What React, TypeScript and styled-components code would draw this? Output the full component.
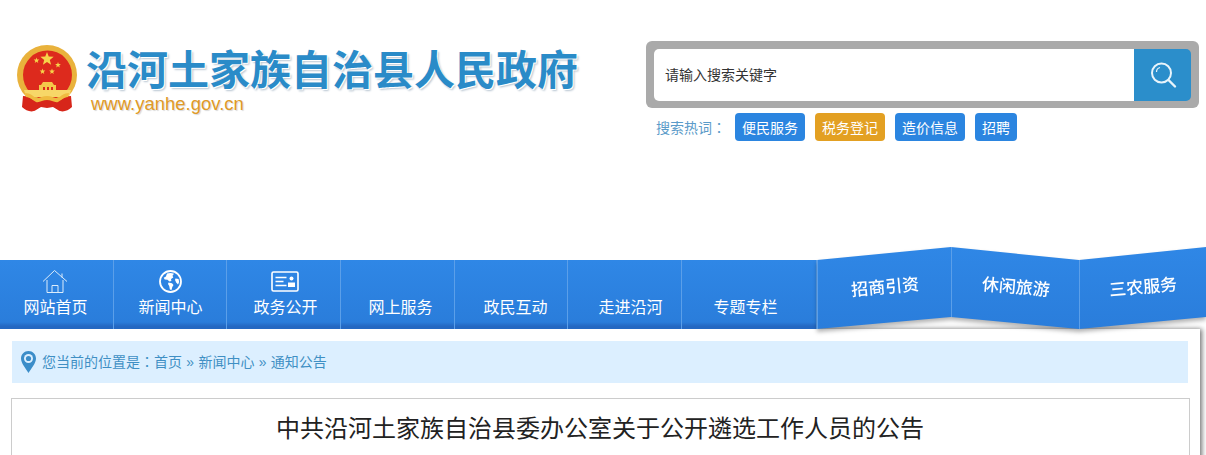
import React from "react";
import styled, { createGlobalStyle } from "styled-components";

const CJK = `"Noto Sans CJK SC", "Liberation Sans", sans-serif`;

const GlobalStyle = createGlobalStyle`
  html, body {
    margin: 0;
    padding: 0;
    background: #fff;
    overflow: hidden;
  }
  * {
    box-sizing: border-box;
  }
`;

const Page = styled.div`
  width: 1206px;
  height: 455px;
  overflow: hidden;
  font-family: ${CJK};
`;

const Header = styled.header`
  height: 247px;
  display: flex;
  justify-content: space-between;
  padding: 41px 7px 0 16px;
`;

const Brand = styled.div`
  display: flex;
  gap: 8px;
  padding-top: 4px;
`;

const BrandText = styled.div`
  display: flex;
  flex-direction: column;
`;

const SiteTitle = styled.h1`
  margin: -2px 0 0;
  font-size: 41px;
  line-height: 48px;
  font-weight: 700;
  color: #2a8bc8;
  white-space: nowrap;
  text-shadow: 1px 1px 0 #fff, 2px 2px 2px #b9c6d2;
`;

const SiteUrl = styled.div`
  margin: 2px 0 0 5px;
  font-family: "Liberation Sans", sans-serif;
  font-size: 18.5px;
  line-height: 22px;
  color: #e09a26;
  text-shadow: 1px 1px 1px #d8d8d8;
`;

const SearchColumn = styled.div`
  width: 553px;
`;

const SearchFrame = styled.form`
  height: 67px;
  padding: 8px 8px 7px;
  display: flex;
  background: #aaaaaa;
  border-radius: 6px;
`;

const SearchInput = styled.div`
  flex: 1;
  display: flex;
  align-items: center;
  padding: 0 0 2px 11px;
  font-size: 14px;
  color: #333;
  background: #fff;
  border-radius: 5px 0 0 5px;
`;

const SearchButton = styled.button`
  width: 57px;
  border: 0;
  padding: 0;
  display: flex;
  align-items: center;
  justify-content: center;
  background: #2b8ecb;
  border-radius: 0 5px 5px 0;
`;

const HotRow = styled.div`
  margin-top: 5px;
  padding-left: 10px;
  display: flex;
  gap: 10px;
  align-items: center;
`;

const HotLabel = styled.span`
  width: 69px;
  font-size: 14px;
  color: #5b9bc9;
  white-space: nowrap;
`;

const Colon = styled.span`
  font-family: "Noto Sans CJK TC", sans-serif;
`;

const HotTag = styled.a<{ $active?: boolean }>`
  height: 28px;
  padding: 0 7px;
  display: flex;
  align-items: center;
  font-size: 14px;
  color: #fff;
  background: ${(p) => (p.$active ? "#e3a022" : "#2b85e0")};
  border-radius: 4px;
`;

const Nav = styled.nav`
  position: relative;
  z-index: 2;
  height: 82px;
  display: flex;
  align-items: flex-end;
`;

const NavItem = styled.a<{ $width: number }>`
  height: 69px;
  flex: none;
  width: ${(p) => p.$width}px;
  display: flex;
  flex-direction: column;
  align-items: center;
  color: #fff;
  font-size: 16px;
  background: linear-gradient(#2f87e6, #2a7ddb 90%, #2468c2 96%);
  border-right: 1px solid #5b9fe9;
`;

// the labels sit on a slightly wider grid than the dividers
const NavInner = styled.span<{ $nudge: number }>`
  margin-left: ${(p) => p.$nudge * 2}px;
  display: flex;
  flex-direction: column;
  align-items: center;
`;

const NavIcon = styled.span`
  height: 34px;
  padding-top: 8px;
  display: flex;
  align-items: center;
`;

const NavLabel = styled.span`
  line-height: 24px;
`;

const Ribbon = styled.div`
  flex: 1;
  height: 82px;
  display: flex;
  filter: drop-shadow(0 3px 2px rgba(0, 0, 0, 0.3));
`;

const RibbonItem = styled.a<{ $width: number; $rise?: boolean }>`
  width: ${(p) => p.$width}px;
  height: 82px;
  display: flex;
  align-items: center;
  justify-content: center;
  padding-bottom: 6px;
  color: #fff;
  font-size: 17px;
  font-weight: 500;
  background: linear-gradient(#2f87e6, #2a7ddb);
  clip-path: ${(p) =>
    p.$rise
      ? "polygon(0 13px, 100% 0, 100% 70px, 0 82px)"
      : "polygon(0 0, 100% 13px, 100% 82px, 0 70px)"};
  border-left: 1px solid #5b9fe9;
`;

const RibbonLabel = styled.span<{ $rise?: boolean }>`
  display: block;
  transform: rotate(${(p) => (p.$rise ? "-5deg" : "5deg")});
`;

const Shell = styled.main`
  width: 1200px;
  height: 140px;
  padding: 12px;
  background: #fff;
  box-shadow: 2px 0 5px rgba(0, 0, 0, 0.55);
`;

const Breadcrumb = styled.div`
  height: 42px;
  display: flex;
  align-items: center;
  gap: 6px;
  padding-left: 9px;
  font-size: 14px;
  color: #3f8fc4;
  background: #dcefff;
`;

const Trail = styled.span`
  padding-bottom: 2px;
`;

const Sep = styled.span`
  font-family: "Liberation Sans", sans-serif;
  margin: 0 4.3px;
`;

const Article = styled.article`
  margin: 15px -2px 0 -1px;
  height: 100px;
  padding-top: 11px;
  border: 1px solid #ccc;
  text-align: center;
`;

const ArticleTitle = styled.h2`
  margin: 0;
  padding-right: 1px;
  font-size: 24px;
  line-height: 34px;
  font-weight: 400;
  color: #222;
`;

const starPoints = (cx: number, cy: number, r: number) =>
  Array.from({ length: 10 }, (_, i) => {
    const a = (-90 + i * 36) * (Math.PI / 180);
    const d = i % 2 === 0 ? r : r * 0.42;
    return `${(cx + d * Math.cos(a)).toFixed(2)},${(cy + d * Math.sin(a)).toFixed(2)}`;
  }).join(" ");

const Emblem = () => (
  <svg width="62" height="68" viewBox="0 0 62 68" style={{ flex: "none" }}>
    <circle cx="31" cy="30" r="30" fill="#e9b23c" />
    <circle cx="31.500" cy="30" r="24.500" fill="#dd2a1d" />
    <polygon points={starPoints(31, 14, 7)} fill="#f6d44a" />
    <polygon points={starPoints(20.500, 15.500, 3)} fill="#f6d44a" />
    <polygon points={starPoints(42, 20, 3)} fill="#f6d44a" />
    <polygon points={starPoints(26.500, 26.500, 3)} fill="#f6d44a" />
    <polygon points={starPoints(36, 26.500, 3)} fill="#f6d44a" />
    <path d="M27 37h9l2 3H25z" fill="#f4c94a" />
    <path d="M23 40h17v5H23z" fill="#f4c94a" />
    <path d="M27 42h2v3h-2zM31 42h2v3h-2zM35 42h2v3h-2z" fill="#dd2a1d" />
    <path d="M8 45h47l-2 7H10z" fill="#f7d768" />
    <path
      d="M7 51c4 0 7 2 10 4 3 1 6-1 8-2 2 1 4 2 6 2s4-1 6-2c2 1 5 3 8 2 3-2 6-4 10-4l1 11c-4 4-10 6-14 3l-5-3-6 1-6-1-5 3c-4 3-10 1-14-3z"
      fill="#d7261a"
    />
    <path
      d="M9 48c5 0 8 3 11 5 3 1 6-2 11-2s8 3 11 2c3-2 6-5 11-5l-1 4c-4 0-7 3-10 5-3 1-7-2-11-2s-8 3-11 2c-3-2-6-5-10-5z"
      fill="#efbb40"
    />
  </svg>
);

const SearchGlass = () => (
  <svg width="28" height="28" viewBox="0 0 28 28" fill="none" stroke="#e9f4fb">
    <circle cx="12.500" cy="12" r="9.500" strokeWidth="2" />
    <path d="M19.500 19l6.500 6.500" strokeWidth="2.400" strokeLinecap="round" />
    <path d="M7.500 11c0-2.500 1.500-4 3.500-4.500" strokeWidth="1.200" />
  </svg>
);

const HomeIcon = () => (
  <svg width="26" height="25" viewBox="0 0 26 25" fill="none" stroke="#dcecfb" strokeWidth="1">
    <path d="M1 12.500L12.500 1.500 25 12.500" />
    <path d="M20 4.500v4" />
    <path d="M5 11v12.500h16V11" />
    <path d="M10 23.500v-7h6v7" />
  </svg>
);

const GlobeIcon = () => (
  <svg width="23" height="23" viewBox="0 0 23 23">
    <circle cx="11.500" cy="11.500" r="10.500" fill="none" stroke="#fff" strokeWidth="1.800" />
    <path
      d="M8 3.500c2-.8 5-.8 7 .2l-1.500 2 .8 1.800-2.300 1.600.4 2-2 .4-1.900-1.800-2.800-.2-1-1.800 2.200-1.200z"
      fill="#fff"
    />
    <path d="M9.500 12.500l3.500.7 1.500 1.800-1.200 2-.8 3-1.600-.6-.7-3.500-1.200-1.800z" fill="#fff" />
    <path d="M16.500 8.500l3 .5.700 3-1.200 2.500-1.800-2-1.200-2.500z" fill="#fff" />
  </svg>
);

const CardIcon = () => (
  <svg width="28" height="21" viewBox="0 0 28 21" fill="none">
    <rect x="1" y="1" width="26" height="19" rx="1.500" stroke="#fff" strokeWidth="1.600" />
    <path d="M4.500 6.500h11M4.500 10.500h8M4.500 14.500h11" stroke="#fff" strokeWidth="1.500" />
    <circle cx="20.500" cy="7.500" r="2" fill="#fff" />
    <path d="M17 16v-4.500h7V16z" fill="#fff" />
  </svg>
);

const PinIcon = () => (
  <svg width="15" height="22" viewBox="0 0 15 22" style={{ flex: "none" }}>
    <path
      d="M7.500 0C3.300 0 0 3.300 0 7.400c0 4.700 4.700 9.700 7.500 14.600C10.300 17.100 15 12.100 15 7.400 15 3.300 11.700 0 7.500 0z"
      fill="#3b8dc9"
    />
    <circle cx="7.500" cy="7.500" r="4.500" fill="#dcefff" />
    <circle cx="7.500" cy="7.500" r="2.600" fill="#3b8dc9" />
  </svg>
);

const hotWords = [
  { text: "便民服务" },
  { text: "税务登记", active: true },
  { text: "造价信息" },
  { text: "招聘" },
];

const navItems: { text: string; width: number; nudge: number; icon?: React.ReactNode }[] = [
  { text: "网站首页", width: 114, nudge: -1, icon: <HomeIcon /> },
  { text: "新闻中心", width: 113, nudge: 0.5, icon: <GlobeIcon /> },
  { text: "政务公开", width: 114, nudge: 2, icon: <CardIcon /> },
  { text: "网上服务", width: 114, nudge: 3 },
  { text: "政民互动", width: 113, nudge: 4.5 },
  { text: "走进沿河", width: 114, nudge: 6 },
  { text: "专题专栏", width: 135, nudge: -3.5 },
];

const ribbonItems = [
  { text: "招商引资", width: 134, rise: true },
  { text: "休闲旅游", width: 128, rise: false },
  { text: "三农服务", width: 127, rise: true },
];

const App: React.FC = () => {
  return (
    <Page>
      <GlobalStyle />
      <Header>
        <Brand>
          <Emblem />
          <BrandText>
            <SiteTitle>沿河土家族自治县人民政府</SiteTitle>
            <SiteUrl>www.yanhe.gov.cn</SiteUrl>
          </BrandText>
        </Brand>
        <SearchColumn>
          <SearchFrame>
            <SearchInput>请输入搜索关键字</SearchInput>
            <SearchButton type="button">
              <SearchGlass />
            </SearchButton>
          </SearchFrame>
          <HotRow>
            <HotLabel>
              搜索热词<Colon>：</Colon>
            </HotLabel>
            {hotWords.map((w) => (
              <HotTag key={w.text} $active={w.active}>
                {w.text}
              </HotTag>
            ))}
          </HotRow>
        </SearchColumn>
      </Header>
      <Nav>
        {navItems.map((item) => (
          <NavItem key={item.text} $width={item.width}>
            <NavInner $nudge={item.nudge}>
              <NavIcon>{item.icon}</NavIcon>
              <NavLabel>{item.text}</NavLabel>
            </NavInner>
          </NavItem>
        ))}
        <Ribbon>
          {ribbonItems.map((item) => (
            <RibbonItem key={item.text} $width={item.width} $rise={item.rise}>
              <RibbonLabel $rise={item.rise}>{item.text}</RibbonLabel>
            </RibbonItem>
          ))}
        </Ribbon>
      </Nav>
      <Shell>
        <Breadcrumb>
          <PinIcon />
          <Trail>
            您当前的位置是<Colon>：</Colon>首页<Sep>»</Sep>新闻中心<Sep>»</Sep>通知公告
          </Trail>
        </Breadcrumb>
        <Article>
          <ArticleTitle>中共沿河土家族自治县委办公室关于公开遴选工作人员的公告</ArticleTitle>
        </Article>
      </Shell>
    </Page>
  );
};

export default App;
